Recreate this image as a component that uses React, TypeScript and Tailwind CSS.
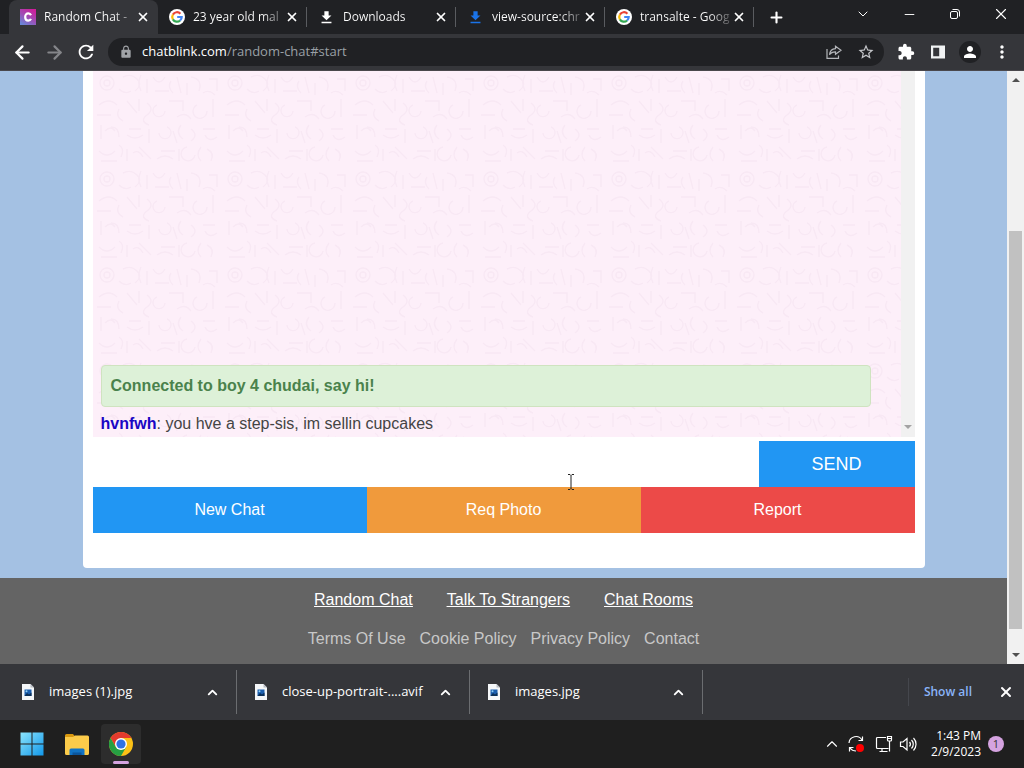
import React, { useState } from 'react';
import { ArrowLeft, ArrowRight, ChevronDown, ChevronUp, X, Plus, Minus } from 'lucide-react';
import { MdExtension, MdLock, MdRefresh, MdStarBorder, MdMoreVert, MdPerson, MdDownload } from 'react-icons/md';

const GoogleIcon = () => (
  <svg viewBox="0 0 16 16" className="size-4 shrink-0">
    <circle cx="8" cy="8" r="8" fill="#fff" />
    <g fill="none" strokeWidth="2.2">
      <path d="M3.9 5.6A4.7 4.7 0 0 1 11.4 4.7" stroke="#ea4335" />
      <path d="M3.9 5.6A4.7 4.7 0 0 0 3.9 10.4" stroke="#fbbc05" />
      <path d="M3.9 10.4A4.7 4.7 0 0 0 11.1 11.5" stroke="#34a853" />
      <path d="M11.1 11.5A4.7 4.7 0 0 0 12.7 8H8.2" stroke="#4285f4" />
    </g>
  </svg>
);

const ChatblinkIcon = () => (
  <svg viewBox="0 0 16 16" className="size-4 shrink-0">
    <defs>
      <linearGradient id="blink" x1="0.8" y1="0" x2="0.2" y2="1">
        <stop offset="0" stopColor="#d01c9a" />
        <stop offset="0.5" stopColor="#a04cb4" />
        <stop offset="1" stopColor="#6a86d8" />
      </linearGradient>
    </defs>
    <rect width="16" height="16" fill="url(#blink)" />
    <path d="M11 6.3C10.4 4.9 9.4 4.4 8.3 4.4 6.4 4.4 5.2 5.9 5.2 8S6.400 11.600 8.300 11.600C9.500 11.600 10.500 11 11 9.800" fill="none" stroke="#fff" strokeWidth="2.200" />
  </svg>
);

const DownloadIcon = ({ blue }: { blue?: boolean }) => (
  <MdDownload size={17} className={blue ? 'shrink-0 text-[#1a73e8]' : 'shrink-0 text-white'} />
);

const ShareIcon = () => (
  <svg viewBox="0 0 16 16" className="size-4" fill="none" stroke="#b4b6ba" strokeWidth="1.2">
    <path d="M1 5v9.400h11.500v-3" />
    <path d="M9.500 2.200L15 6.200l-5.500 4V7.800c-3 0-4.800 1-6 3 .4-3.600 2.600-6 6-6.200z" />
  </svg>
);

const SidePanelIcon = () => (
  <svg viewBox="0 0 16 16" className="size-4">
    <path d="M1 1.500h14v13H1zM3.200 3.700v8.600h6V3.700z" fill="#f1f3f4" fillRule="evenodd" />
  </svg>
);

const RestoreIcon = () => (
  <svg viewBox="0 0 12 12" className="size-3" fill="none" stroke="#fff">
    <rect x="1.500" y="3.500" width="7" height="7" rx="1.500" />
    <path d="M3.500 1.500H8A2.500 2.500 0 0 1 10.500 4v4.500" />
  </svg>
);

const FileIcon = () => (
  <svg viewBox="0 0 14 16" className="h-4 w-3.5 shrink-0">
    <path d="M1 0h8.500L13 3.500V16H1z" fill="#f5f7f9" />
    <path d="M9.500 0v3.500H13z" fill="#b9bec4" />
    <rect x="3.500" y="5.500" width="7" height="6.500" fill="#1c5fae" />
    <path d="M3.500 12l2.500-3 2 1.500 2.500-2V12z" fill="#0c3058" />
    <circle cx="5.500" cy="7.300" r="1" fill="#8fd0f5" />
  </svg>
);

const WindowsIcon = () => (
  <svg viewBox="0 0 24 24" className="size-6">
    <defs>
      <linearGradient id="win" x1="0" y1="0" x2="1" y2="1">
        <stop offset="0" stopColor="#8be4fc" />
        <stop offset="1" stopColor="#1298ea" />
      </linearGradient>
    </defs>
    <path d="M.5.500h11v11H.5zM12.500.500h11v11h-11zM.5 12.500h11v11H.5zM12.500 12.500h11v11h-11z" fill="url(#win)" />
  </svg>
);

const FolderIcon = () => (
  <svg viewBox="0 0 24 24" className="size-6">
    <path d="M0 3.500A1.500 1.500 0 0 1 1.500 2H8l2.500 3H0z" fill="#d9980f" />
    <path d="M0 5h8l2-1.500h12.500A1.500 1.500 0 0 1 24 5v16.500a1.500 1.500 0 0 1-1.500 1.500h-21A1.500 1.500 0 0 1 0 21.500z" fill="#fccb4a" />
    <path d="M4.500 23v-5A1.500 1.500 0 0 1 6 16.500h12a1.500 1.500 0 0 1 1.500 1.500v5z" fill="#1173c4" />
    <path d="M7.500 23v-2.500h9V23z" fill="#0b559b" />
  </svg>
);

const ChromeIcon = () => (
  <svg viewBox="0 0 24 24" className="size-6">
    <circle cx="12" cy="12" r="12" fill="#fbc116" />
    <path d="M1.600 6A12 12 0 0 1 22.400 6H12L6.800 15z" fill="#e33b2e" />
    <path d="M1.600 6A12 12 0 0 0 12 24L17.200 15 12 17.500 6.800 15z" fill="#269f43" />
    <circle cx="12" cy="12" r="6" fill="#fff" />
    <circle cx="12" cy="12" r="4.600" fill="#2f72e4" />
  </svg>
);

const SyncIcon = () => (
  <svg viewBox="0 0 18 18" className="size-[18px]" fill="none" stroke="#fff" strokeWidth="1.2">
    <path d="M2 8a7 7 0 0 1 13-3M15.500 1.500v4h-4M2.500 16.500v-4h4M3 13c1.500 2 3.500 3 6 3" />
    <circle cx="13" cy="13" r="4" fill="#f00" stroke="none" />
  </svg>
);

const NetworkIcon = () => (
  <svg viewBox="0 0 18 18" className="size-[18px]" fill="none" stroke="#fff" strokeWidth="1.2">
    <path d="M11 2.500H2.500A1 1 0 0 0 1.500 3.500v9a1 1 0 0 0 1 1h11M7 13.500v3M4.500 16.500h8M14.500 6.500v10M12.500 1.500h4v3.500a1 1 0 0 1-1 1h-2a1 1 0 0 1-1-1zM12.500 3.500h4" />
  </svg>
);

const VolumeIcon = () => (
  <svg viewBox="0 0 18 18" className="size-[18px]" fill="none" stroke="#fff" strokeWidth="1.2">
    <path d="M1.500 7v4.500h2.500L8 15V3.500L4 7zM10.500 7a3.500 3.500 0 0 1 0 4.500M12.500 5a6 6 0 0 1 0 8.500M14.500 3a9 9 0 0 1 0 12.500" />
  </svg>
);

// Faint doodle texture behind the messages
const ChatTexture = () => (
  <svg className="absolute inset-0 size-full" aria-hidden="true">
    <defs>
      <pattern id="doodle" width="128" height="96" patternUnits="userSpaceOnUse">
        <g fill="none" stroke="#f8e8f4" strokeWidth="1.4">
          <circle cx="14" cy="12" r="7" />
          <circle cx="14" cy="12" r="3" />
          <path d="M30 6q8-4 14 2t-2 12M54 8v14M60 6q6 10 12 0M84 6l4 16M98 6q12 2 8 14M116 8h8v12" />
          <path d="M26 18q6 6 12 2M62 20h14M94 12v12M110 22q6-4 12 2M48 4q-4 8 0 16M78 10q-4 6 2 12" />
          <path d="M6 34q10-8 18 0M34 30l10 12M54 32q8 6 0 12t2 10M76 30h14v10M104 34a7 7 0 1 0 10 6" />
          <path d="M4 44h14M26 38q-4 8 4 12M46 28v12M64 34a6 6 0 1 0 8 6M84 46q8-6 14 2M120 28v18" />
          <path d="M8 54v14M18 56q8 0 8 10M36 58h12M66 62a6 6 0 1 0 8-6M88 54q-6 8 2 14M110 58h12" />
          <path d="M12 60q6-6 10 0M34 64q8 6 16 0M56 58v14M80 60l4 12M98 58q8 6 0 12M112 64q4 8 12 2" />
          <path d="M6 80q8 8 16 0M34 78v12M46 76l12 12M68 80h14M94 76a7 7 0 1 0 8 8M114 78q8 4 4 12" />
          <path d="M8 90h16M26 74q6 4 2 12M40 82q6-4 10 4M64 88q8-6 16 0M86 78v12M108 76q-6 8 0 14" />
        </g>
      </pattern>
    </defs>
    <rect width="100%" height="100%" fill="url(#doodle)" />
  </svg>
);

const tabs = [
  { title: 'Random Chat -', icon: <ChatblinkIcon />, active: true },
  { title: '23 year old mal', icon: <GoogleIcon /> },
  { title: 'Downloads', icon: <DownloadIcon /> },
  { title: 'view-source:chr', icon: <DownloadIcon blue /> },
  { title: 'transalte - Goog', icon: <GoogleIcon /> },
];

const downloads = ['images (1).jpg', 'close-up-portrait-....avif', 'images.jpg'];

const IconButton = ({ label, children }: { label: string; children: React.ReactNode }) => (
  <button aria-label={label} className="flex h-8 w-8 shrink-0 items-center justify-center">{children}</button>
);

const TabStrip = () => (
  <div className="flex h-[34px] shrink-0 bg-[#202124] pl-[9px]">
    {tabs.map((tab) => (
      <div
        key={tab.title}
        className={`flex w-[149px] items-center pr-2 pl-[11px] ${tab.active ? 'rounded-t-lg bg-[#35363a]' : ''}`}
      >
        {tab.icon}
        <button className={`ml-2 min-w-0 flex-1 bg-linear-to-r from-white to-transparent bg-clip-text text-left text-[12px] whitespace-nowrap text-transparent ${tab.title === 'Downloads' ? 'from-100%' : 'from-75% to-105%'}`}>
          {tab.title}
        </button>
        <button aria-label={`Close ${tab.title}`}><X size={14} strokeWidth={3} /></button>
        {!tab.active && <span className="-mr-2 ml-[7px] h-5 w-px bg-[#5a5c60]" />}
      </div>
    ))}
    <button aria-label="New tab" className="flex w-11 items-center justify-center"><Plus size={17} strokeWidth={3} /></button>
    <div className="ml-auto flex h-7">
      <button aria-label="Search tabs" className="flex w-[46px] items-center justify-center"><ChevronDown size={16} strokeWidth={1.5} /></button>
      <button aria-label="Minimize" className="flex w-[46px] items-center justify-center"><Minus size={15} strokeWidth={1.5} /></button>
      <button aria-label="Restore" className="flex w-[46px] items-center justify-center"><RestoreIcon /></button>
      <button aria-label="Close window" className="flex w-[46px] items-center justify-center"><X size={18} strokeWidth={1.5} /></button>
    </div>
  </div>
);

const Toolbar = () => (
  <div className="flex h-[37px] shrink-0 items-center border-b border-[#4a484c] bg-[#35363a] px-1.5">
    <IconButton label="Back"><ArrowLeft size={21} strokeWidth={2.5} /></IconButton>
    <IconButton label="Forward"><ArrowRight size={21} strokeWidth={2.5} className="text-[#85868a]" /></IconButton>
    <IconButton label="Reload"><MdRefresh size={22} /></IconButton>
    <div className="mx-1.5 flex h-7 flex-1 items-center rounded-full bg-[#202124] pr-0.5 pl-[11px]">
      <MdLock size={14} className="mr-[9px] shrink-0 text-[#a0a3a7]" />
      <button className="flex-1 text-left text-[13px] text-[#9aa0a6]">
        <span className="text-white">chatblink.com</span>/random-chat#start
      </button>
      <IconButton label="Share"><ShareIcon /></IconButton>
      <IconButton label="Bookmark"><MdStarBorder size={18} className="text-[#c4c6ca]" /></IconButton>
    </div>
    <IconButton label="Extensions"><MdExtension size={18} /></IconButton>
    <IconButton label="Side panel"><SidePanelIcon /></IconButton>
    <IconButton label="Profile">
      <span className="flex size-[22px] items-center justify-center rounded-full bg-[#202124]"><MdPerson size={18} /></span>
    </IconButton>
    <IconButton label="Menu"><MdMoreVert size={20} /></IconButton>
  </div>
);

const ChatCard = () => {
  const [message, setMessage] = useState('');

  return (
    <main className="mx-auto mb-2.5 flex min-h-0 w-[842px] max-w-full flex-1 flex-col rounded-b bg-white px-2.5 pb-[35px]">
      <div className="relative flex min-h-0 flex-1 bg-[#fdeff9]">
        <ChatTexture />
        <div className="relative flex flex-1 flex-col justify-end pr-[30px] pb-px pl-2">
          <div className="mb-[5px] flex h-[42px] items-center rounded border border-[#cfe3c0] bg-[#ddf1d8] px-[9px] font-bold text-[#4a824c]">
            Connected to boy 4 chudai, say hi!
          </div>
          <p className="text-[#444]"><b className="text-[#1a06c4]">hvnfwh</b>: you hve a step-sis, im sellin cupcakes</p>
        </div>
        <div className="relative flex w-3.5 items-end justify-center bg-[#f1f1f1] pb-2">
          <span className="border-x-4 border-t-4 border-x-transparent border-t-[#a3a3a3]" />
        </div>
      </div>
      <form className="relative mt-1 flex h-[46px] shrink-0" onSubmit={(e) => e.preventDefault()}>
        <input
          aria-label="Message" type="text" value={message}
          onChange={(e) => setMessage(e.target.value)}
          className="min-w-0 flex-1 px-2 outline-none"
        />
        <button className="w-[156px] bg-[#2196f3] text-[18px] text-white">SEND</button>
        {/* text pointer */}
        <svg viewBox="0 0 8 16" className="absolute top-[33px] left-[474px] h-4 w-2" fill="none" stroke="#222">
          <path d="M1 .5h2l1 1 1-1h2M4 1.500v13M1 15.500h2l1-1 1 1h2" />
        </svg>
      </form>
      <div className="grid h-[46px] shrink-0 grid-cols-3 text-white text-shadow-2xs">
        <button className="bg-[#2196f3]">New Chat</button>
        <button className="bg-[#f09a3c]">Req Photo</button>
        <button className="bg-[#ec4a48]">Report</button>
      </div>
    </main>
  );
};

const SiteFooter = () => (
  <footer className="flex shrink-0 flex-col items-center gap-[15px] bg-[#646464] pt-2.5 pb-[13px]">
    <nav className="flex gap-[34px] text-white underline">
      <a href="#random">Random Chat</a>
      <a href="#strangers">Talk To Strangers</a>
      <a href="#rooms">Chat Rooms</a>
    </nav>
    <nav className="flex gap-3.5 text-[#c8c8c8]">
      <a href="#terms">Terms Of Use</a>
      <a href="#cookies">Cookie Policy</a>
      <a href="#privacy">Privacy Policy</a>
      <a href="#contact">Contact</a>
    </nav>
  </footer>
);

const DownloadShelf = () => (
  <div className="flex h-14 shrink-0 items-center bg-[#35363a] pl-1 text-[13px]">
    {downloads.map((name) => (
      <div key={name} className="flex h-11 w-[233px] items-center border-r border-[#6b6d70] pr-4 pl-[17px]">
        <FileIcon />
        <button className="ml-3.5 flex-1 text-left whitespace-nowrap">{name}</button>
        <button aria-label={`Options for ${name}`}><ChevronUp size={15} strokeWidth={3} /></button>
      </div>
    ))}
    <div className="ml-auto flex h-7 items-center border-l border-[#45474d] pl-[15px]">
      <button className="text-[12px] font-semibold text-[#8ab4f8]">Show all</button>
    </div>
    <button aria-label="Close downloads" className="mr-2.5 ml-[26px]"><X size={16} strokeWidth={3} /></button>
  </div>
);

const Taskbar = () => (
  <div className="flex h-12 shrink-0 items-center bg-[#1f1f1f] pr-5 pl-3">
    <button aria-label="Start" className="flex w-10 justify-center"><WindowsIcon /></button>
    <button aria-label="File Explorer" className="ml-[5px] flex w-10 justify-center"><FolderIcon /></button>
    <button aria-label="Chrome" className="relative ml-1 flex size-10 items-center justify-center rounded bg-[#2d2d2d]">
      <ChromeIcon />
      <span className="absolute bottom-0 h-[3px] w-4 rounded-full bg-[#d5a3e0]" />
    </button>
    <div className="ml-auto flex items-center">
      <button aria-label="Hidden icons"><ChevronUp size={18} strokeWidth={1.5} /></button>
      <button aria-label="Sync" className="ml-1.5"><SyncIcon /></button>
      <button aria-label="Network" className="ml-2.5"><NetworkIcon /></button>
      <button aria-label="Volume" className="ml-1.5"><VolumeIcon /></button>
      <button className="ml-3.5 text-right text-[12px] leading-4">
        <span className="block">1:43 PM</span>
        <span className="block">2/9/2023</span>
      </button>
      <button className="ml-[7px] size-4 rounded-full bg-[#d5a3e0] text-[11px] leading-4 text-[#333]">1</button>
    </div>
  </div>
);

const App: React.FC = () => {
  return (
    <div className="flex h-screen flex-col overflow-hidden font-['Open_Sans',sans-serif] text-white">
      <TabStrip />
      <Toolbar />
      <div className="flex min-h-0 flex-1 font-['Liberation_Sans',sans-serif]">
        <div className="flex min-w-0 flex-1 flex-col bg-[#a4c1e3]">
          <ChatCard />
          <SiteFooter />
        </div>
        <div className="flex w-[17px] flex-col items-center bg-[#f1f1f1] py-[7px]">
          <span className="border-x-4 border-b-4 border-x-transparent border-b-[#505050]" />
          <span className="mt-auto mb-6 h-[398px] w-[13px] bg-[#c1c1c1]" />
          <span className="border-x-4 border-t-4 border-x-transparent border-t-[#505050]" />
        </div>
      </div>
      <DownloadShelf />
      <Taskbar />
    </div>
  );
};

export default App;
